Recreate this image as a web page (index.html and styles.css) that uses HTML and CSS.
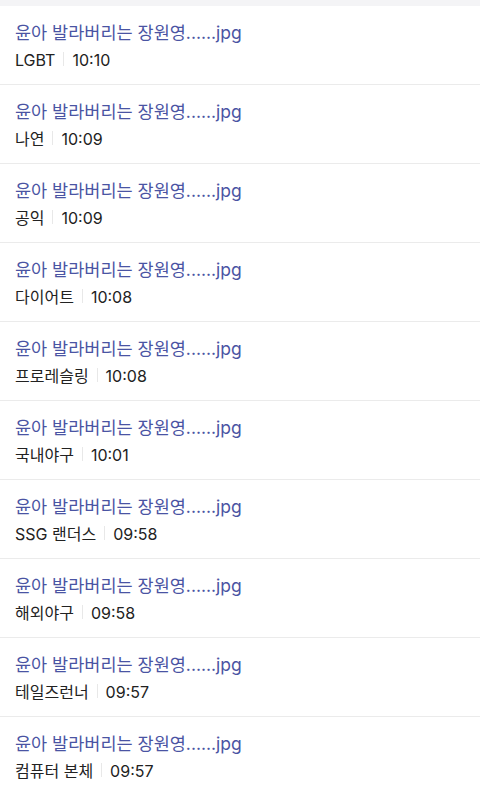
FILE: index.html
```html
<!DOCTYPE html>
<html>
<head>
    <meta charset="UTF-8">
    <title>게시판 목록</title>
    <link rel="stylesheet" href="styles.css">
</head>
<body>
    <div class="top-band"></div>

    <ul class="post-list">
        <li class="post">
            <a class="post-title" href="#">윤아 발라버리는 장원영......jpg</a>
            <div class="post-meta"><span class="board">LGBT</span><span class="time">10:10</span></div>
        </li>
        <li class="post">
            <a class="post-title" href="#">윤아 발라버리는 장원영......jpg</a>
            <div class="post-meta"><span class="board">나연</span><span class="time">10:09</span></div>
        </li>
        <li class="post">
            <a class="post-title" href="#">윤아 발라버리는 장원영......jpg</a>
            <div class="post-meta"><span class="board">공익</span><span class="time">10:09</span></div>
        </li>
        <li class="post">
            <a class="post-title" href="#">윤아 발라버리는 장원영......jpg</a>
            <div class="post-meta"><span class="board">다이어트</span><span class="time">10:08</span></div>
        </li>
        <li class="post">
            <a class="post-title" href="#">윤아 발라버리는 장원영......jpg</a>
            <div class="post-meta"><span class="board">프로레슬링</span><span class="time">10:08</span></div>
        </li>
        <li class="post">
            <a class="post-title" href="#">윤아 발라버리는 장원영......jpg</a>
            <div class="post-meta"><span class="board">국내야구</span><span class="time">10:01</span></div>
        </li>
        <li class="post">
            <a class="post-title" href="#">윤아 발라버리는 장원영......jpg</a>
            <div class="post-meta"><span class="board">SSG 랜더스</span><span class="time">09:58</span></div>
        </li>
        <li class="post">
            <a class="post-title" href="#">윤아 발라버리는 장원영......jpg</a>
            <div class="post-meta"><span class="board">해외야구</span><span class="time">09:58</span></div>
        </li>
        <li class="post">
            <a class="post-title" href="#">윤아 발라버리는 장원영......jpg</a>
            <div class="post-meta"><span class="board">테일즈런너</span><span class="time">09:57</span></div>
        </li>
        <li class="post">
            <a class="post-title" href="#">윤아 발라버리는 장원영......jpg</a>
            <div class="post-meta"><span class="board">컴퓨터 본체</span><span class="time">09:57</span></div>
        </li>
    </ul>
</body>
</html>
```

FILE: styles.css
```css
body {
    margin: 0;
    background-color: #fff;
    font-family: Inter, "Noto Sans CJK KR", sans-serif;
}

.top-band {
    height: 6px;
    background-color: #f4f4f6;
}

.post-list {
    list-style: none;
    margin: 0;
    padding: 0;
}

.post {
    height: 76px;
    box-sizing: content-box;
    padding: 2px 15px 0;
    border-bottom: 1px solid #ebebeb;
    display: flex;
    flex-direction: column;
    justify-content: center;
    gap: 4px;
}

.post-title {
    font-size: 17.5px;
    line-height: 24px;
    color: #4a54a3;
    text-decoration: none;
}

.post-meta {
    display: flex;
    align-items: center;
    font-size: 16px;
    line-height: 22px;
    color: #222;
}

.board::after {
    content: "";
    display: inline-block;
    width: 1px;
    height: 14px;
    margin: 0 8px;
    background-color: #e8e8e8;
}
```
